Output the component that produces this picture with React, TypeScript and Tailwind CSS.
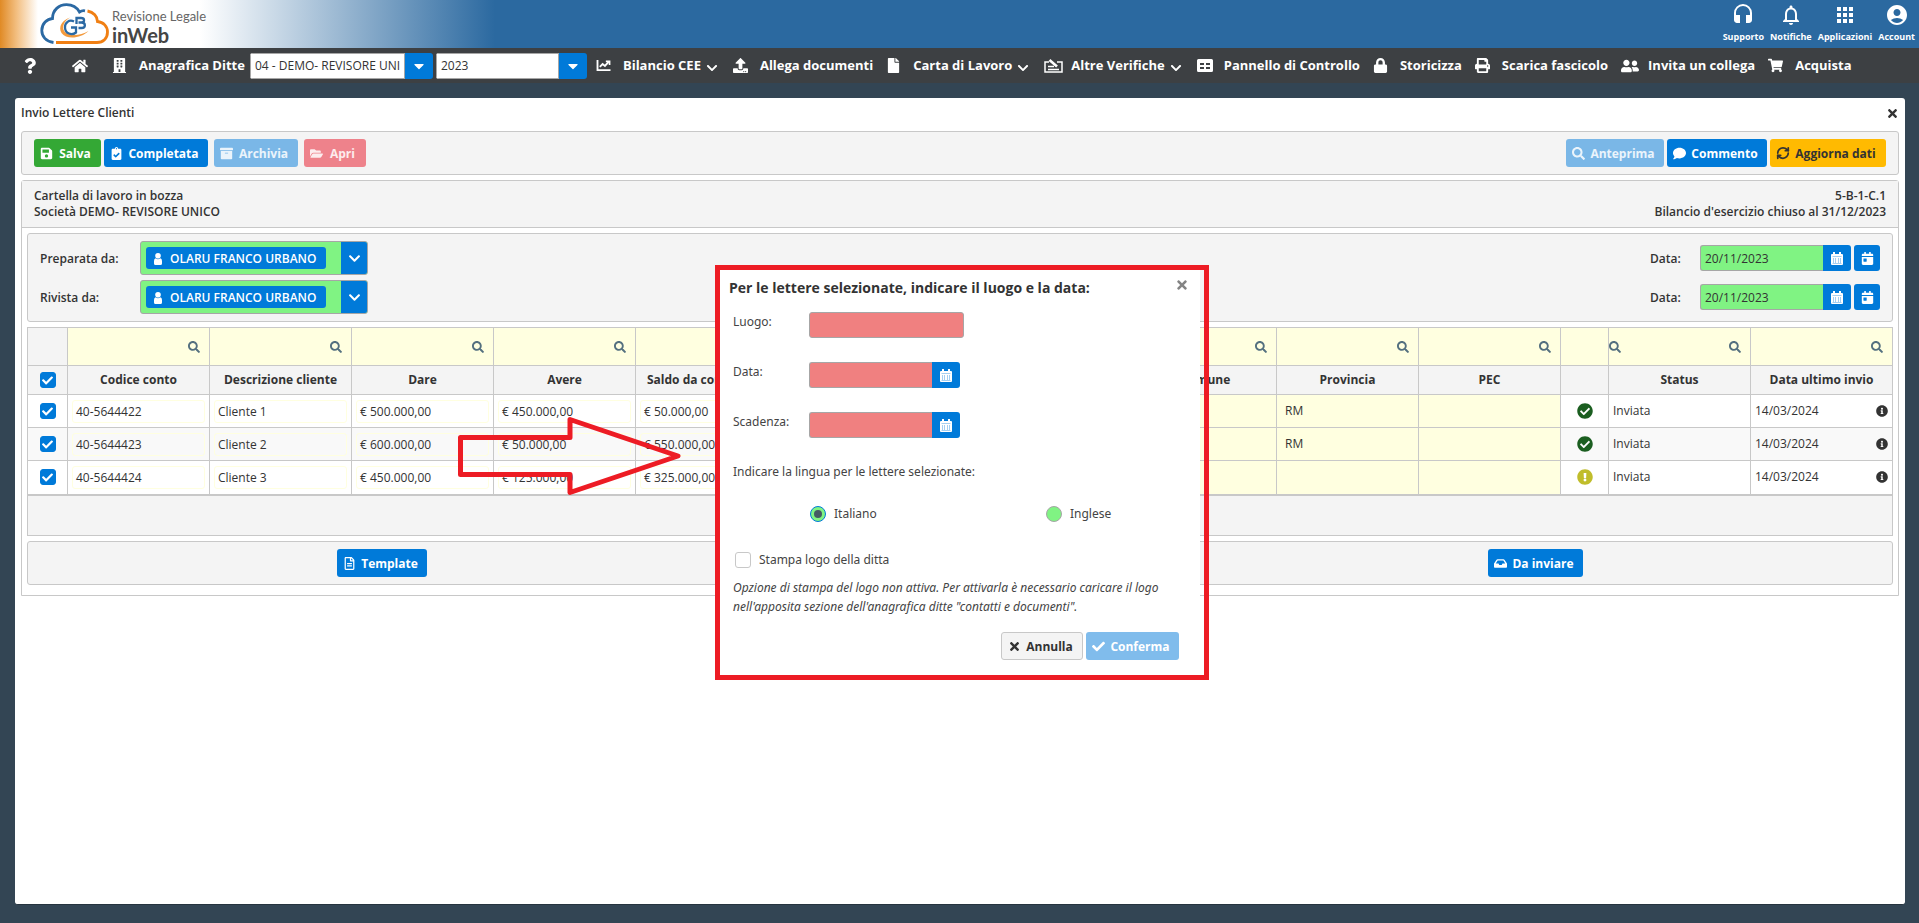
import React, { ReactNode, useState } from "react";
import {
  FaQuestion, FaHome, FaBuilding, FaFile, FaLock, FaPrint, FaUserFriends, FaShoppingCart, FaCaretDown,
  FaChevronDown, FaSave, FaClipboardCheck, FaArchive, FaFolderOpen, FaSearch, FaComment,
  FaCheckCircle, FaExclamationCircle, FaInfoCircle, FaInbox, FaTimes, FaCheck, FaRegFileAlt,
  FaCalendarDay, FaUpload,
} from "react-icons/fa";
import { MdHeadset, MdNotificationsNone, MdApps, MdAccountCircle } from "react-icons/md";
import { RefreshCw } from "lucide-react";

function GbLogo() {
  return (
    <svg viewBox="0 0 70 42" className="h-[42px] w-[70px]" fill="none" aria-label="GB">
      <path d="M13.500 39.500C6 38.500 1.800 33.500 1.800 27.500C1.800 20.500 7 16 12.500 15.500C12.500 7 19 1.600 26.500 1.600C32.500 1.600 37 4.500 39.500 9C41.500 7.700 43.500 7.500 45 7.800" stroke="#2b69a3" strokeWidth="2.800" />
      <path d="M47.500 8C53.500 9 57.500 13.500 57.500 18.500C63.500 19 67.500 23.500 67.500 29C67.500 35.500 63 39.500 57 39.500H16" stroke="#f07f13" strokeWidth="2.800" />
      <path d="M30 14.500C22 17 18 24 21.500 30C26.500 37 41 35.500 48.500 28C40 33 29 33.500 24.500 28.500C21.500 24 24 18 30 14.500Z" fill="#f39a3d" />
      <path d="M34 18.500C29 16 24.800 20 25 24.500C25.200 30.500 31.500 33 36 29.500V24.500H31" stroke="#2b69a3" strokeWidth="2.300" />
      <path d="M36.500 21V15H41C45 15 45 19.300 41.500 19.500H38.500M41.500 19.500C46 19.500 46 25 41.500 25H38.500" stroke="#2b69a3" strokeWidth="2.300" />
    </svg>
  );
}

function ChartIcon() {
  return (
    <svg viewBox="0 0 16 14" className="h-[13px] w-4" fill="none" stroke="currentColor" strokeWidth="2">
      <path d="M1 1V12H15" />
      <path d="M3.500 8.500L6.500 5.500L9 7.500L13 3" />
      <path d="M10 2.500H14V6.500" strokeWidth="1.800" />
    </svg>
  );
}

function BallotIcon() {
  return (
    <svg viewBox="0 0 19 15" className="h-[15px] w-[19px]" fill="none" stroke="currentColor" strokeWidth="1.500">
      <path d="M5 4H1V14H18V4H13" />
      <path d="M4 11.500H15M4 8.500H10" />
      <path d="M5.500 2L13 8.500" strokeWidth="2.600" />
    </svg>
  );
}

function TableIcon() {
  return (
    <svg viewBox="0 0 16 13" className="h-[13px] w-4">
      <path fill="currentColor" fillRule="evenodd" d="M1.500 0H14.500A1.500 1.500 0 0 1 16 1.500V11.500A1.500 1.500 0 0 1 14.500 13H1.500A1.500 1.500 0 0 1 0 11.500V1.500A1.500 1.500 0 0 1 1.500 0ZM3 4V6H7V4ZM9 4V6H13V4ZM3 8V10H7V8ZM9 8V10H13V8Z" />
    </svg>
  );
}

function PersonIcon() {
  return (
    <svg viewBox="0 0 8 12" className="h-3 w-2" fill="currentColor">
      <circle cx="4" cy="2.800" r="2.800" />
      <path d="M1.500 5.200Q4 7.500 6.500 5.200Q8 6 8 8V10.500Q8 12 6.500 12H1.500Q0 12 0 10.500V8Q0 6 1.500 5.200Z" />
    </svg>
  );
}

function CalendarIcon() {
  return (
    <svg viewBox="0 0 12 13" className="h-[13px] w-3">
      <path fill="#fff" d="M2 0H4V2H8V0H10V2H11Q12 2 12 3V12Q12 13 11 13H1Q0 13 0 12V3Q0 2 1 2H2Z" />
      <path stroke="#8fc3ee" strokeWidth="1" fill="none" d="M1.500 4.500H10.500M1.500 11.500H10.500M2.500 6V11M4.500 6V11M7.500 6V11M9.500 6V11" opacity=".8" />
    </svg>
  );
}

type MenuItemProps = { icon: ReactNode; label: string; arrow?: boolean };

function MenuItem({ icon, label, arrow }: MenuItemProps) {
  return (
    <a href="#" className="flex shrink-0 items-center text-[13px] font-bold whitespace-nowrap text-white">
      <span className="flex w-[27px] items-center text-[15px]">{icon}</span>
      {label}
      {arrow && <FaChevronDown className="mt-1 mr-[2px] ml-[5px] text-xs" />}
    </a>
  );
}

type BtnProps = { icon: ReactNode; label: string; tone: string; disabled?: boolean; className?: string; onClick?: () => void };

function Btn({ icon, label, tone, disabled, className = "", onClick }: BtnProps) {
  return (
    <button
      type="button"
      disabled={disabled}
      onClick={onClick}
      className={`flex h-7 shrink-0 items-center rounded-[3px] pl-[6px] text-xs font-bold whitespace-nowrap ${tone} ${className}`}
    >
      <span className="mr-1 flex w-[14px] shrink-0 items-center text-[13px]">{icon}</span>
      <span className="flex-1 pt-px pr-[9px] text-center">{label}</span>
    </button>
  );
}

function PersonRow({ label, id }: { label: string; id: string }) {
  return (
    <div className="flex items-center">
      <label htmlFor={id} className="w-[100px] pt-px text-xs font-semibold">{label}</label>
      <div className="flex h-[34px] w-[228px] overflow-hidden rounded-[3px] border border-[#a6a6a6] bg-[#80f383]">
        <div className="flex flex-1 items-center pl-[5px]">
          <span className="flex h-[22px] w-[180px] items-center gap-2 rounded-[3px] bg-[#007ad9] pt-px pl-2 text-xs font-semibold whitespace-nowrap text-white">
            <PersonIcon />
            OLARU FRANCO URBANO
          </span>
        </div>
        <button id={id} type="button" aria-label={`Scegli ${label}`} className="flex w-[26px] items-center justify-center bg-[#007ad9] text-white">
          <FaChevronDown className="text-[13px]" />
        </button>
      </div>
    </div>
  );
}

function DateRow({ id }: { id: string }) {
  return (
    <div className="flex h-[34px] items-center">
      <label htmlFor={id} className="w-[50px] pt-px text-xs font-semibold">Data:</label>
      <input id={id} type="text" defaultValue="20/11/2023" className="h-[26px] w-[123px] rounded-l-[3px] border border-r-0 border-[#a6a6a6] bg-[#80f383] px-1 text-xs outline-none" />
      <button type="button" aria-label="Apri calendario" className="flex h-[26px] w-7 items-center justify-center rounded-r-[3px] bg-[#007ad9]">
        <CalendarIcon />
      </button>
      <button type="button" aria-label="Oggi" className="ml-[3px] flex h-[26px] w-[26px] items-center justify-center rounded-[3px] bg-[#007ad9] text-[13px] text-white">
        <FaCalendarDay />
      </button>
    </div>
  );
}

function Tick({ id, label, defaultChecked = true }: { id?: string; label: string; defaultChecked?: boolean }) {
  return (
    <span className="grid h-4 w-4 place-items-center">
      <input
        id={id}
        type="checkbox"
        aria-label={label}
        defaultChecked={defaultChecked}
        className="peer col-start-1 row-start-1 h-4 w-4 appearance-none rounded-[3px] border border-[#c8c8c8] bg-white checked:border-[#007ad9] checked:bg-[#007ad9]"
      />
      <FaCheck className="pointer-events-none col-start-1 row-start-1 hidden text-[11px] text-white peer-checked:block" />
    </span>
  );
}

const columns = [
  { title: "Codice conto", width: "w-[142px]" },
  { title: "Descrizione cliente", width: "w-[142px]" },
  { title: "Dare", width: "w-[142px]" },
  { title: "Avere", width: "w-[142px]" },
  { title: "Saldo da cont.", width: "w-[142px]", align: "pl-[11px] text-left" },
  { title: "", width: "w-[142px]" },
  { title: "", width: "w-[73px]" },
  { title: "", width: "w-[142px]" },
  { title: "Comune", width: "w-[142px]" },
  { title: "Provincia", width: "w-[142px]" },
  { title: "PEC", width: "w-[142px]" },
];

const rows = [
  { code: "40-5644422", name: "Cliente 1", dare: "€ 500.000,00", avere: "€ 450.000,00", saldo: "€ 50.000,00", prov: "RM", ok: true, tone: "h-[33px] bg-white" },
  { code: "40-5644423", name: "Cliente 2", dare: "€ 600.000,00", avere: "€ 50.000,00", saldo: "€ 550.000,00", prov: "RM", ok: true, tone: "h-[33px] bg-[#f9f9f9]" },
  { code: "40-5644424", name: "Cliente 3", dare: "€ 450.000,00", avere: "€ 125.000,00", saldo: "€ 325.000,00", prov: "", ok: false, tone: "h-[34px] bg-white" },
];

function LettersTable() {
  const line = "border border-[#c8c8c8]";
  return (
    <table className="w-full table-fixed border-collapse text-xs">
      <colgroup>
        <col className="w-[40px]" />
        {columns.map((c, i) => <col key={i} className={c.width} />)}
        <col className="w-[48px]" />
        <col className="w-[142px]" />
        <col className="w-[142px]" />
      </colgroup>
      <thead className="bg-[#f4f4f4]">
        <tr className="h-[38px]">
          <td className={line} />
          {columns.map((c, i) => (
            <td key={i} className={`${line} bg-[#ffffe0] pr-[9px]`}>
              <FaSearch className="ml-auto text-xs text-[#54707f]" />
            </td>
          ))}
          <td className={`${line} bg-[#ffffe0]`} />
          <td className={`${line} bg-[#ffffe0] pr-[9px]`}>
            <div className="flex justify-between text-xs text-[#54707f]"><FaSearch /><FaSearch /></div>
          </td>
          <td className={`${line} bg-[#ffffe0] pr-[9px]`}>
            <FaSearch className="ml-auto text-xs text-[#54707f]" />
          </td>
        </tr>
        <tr className="h-[29px]">
          <th className={line}><div className="flex justify-center"><Tick label="Seleziona tutti" /></div></th>
          {columns.map((c, i) => (
            <th key={i} className={`${line} overflow-hidden font-bold whitespace-nowrap ${c.align ?? ""}`}>{c.title}</th>
          ))}
          <th className={line} />
          <th className={`${line} font-bold`}>Status</th>
          <th className={`${line} font-bold`}>Data ultimo invio</th>
        </tr>
      </thead>
      <tbody>
        {rows.map((r) => (
          <tr key={r.code} className={r.tone}>
            <td className={line}><div className="flex justify-center"><Tick label={r.name} /></div></td>
            {[r.code, r.name, r.dare, r.avere, r.saldo, "", "", ""].map((v, j) => (
              <td key={j} className={`${line} px-1`}>
                <div className="h-[23px] rounded-[3px] border border-[#ffffe0] px-[3px] leading-[22px] whitespace-nowrap">{v}</div>
              </td>
            ))}
            <td className={`${line} bg-[#ffffe0]`} />
            <td className={`${line} bg-[#ffffe0] px-2`}>{r.prov}</td>
            <td className={`${line} bg-[#ffffe0]`} />
            <td className={line}>
              {r.ok
                ? <FaCheckCircle className="mx-auto text-base text-[#1b5e20]" />
                : <FaExclamationCircle className="mx-auto text-base text-[#c0bd2b]" />}
            </td>
            <td className={`${line} px-1`}>Inviata</td>
            <td className={`${line} px-1`}>
              <div className="flex items-center justify-between">14/03/2024<FaInfoCircle className="text-xs" /></div>
            </td>
          </tr>
        ))}
      </tbody>
      <tfoot>
        <tr className="h-[41px] bg-[#f4f4f4]">
          <td colSpan={15} className="border border-t-2 border-[#c8c8c8]" />
        </tr>
      </tfoot>
    </table>
  );
}

function DialogDate({ id, label }: { id: string; label: string }) {
  return (
    <div className="flex h-[50px] items-start">
      <label htmlFor={id} className="w-[76px] leading-5">{label}</label>
      <input id={id} type="text" className="h-[26px] w-[123px] rounded-l-[3px] border border-r-0 border-[#a6a6a6] bg-[#f08080] px-1 outline-none" />
      <button type="button" aria-label="Apri calendario" className="flex h-[26px] w-7 items-center justify-center rounded-r-[3px] bg-[#007ad9]">
        <CalendarIcon />
      </button>
    </div>
  );
}

function LanguageOption({ label, checked, onPick }: { label: string; checked: boolean; onPick: () => void }) {
  return (
    <label className="flex items-center gap-2">
      <span className="grid h-4 w-4 place-items-center">
        <input
          type="radio"
          name="lingua"
          checked={checked}
          onChange={onPick}
          className="peer col-start-1 row-start-1 h-4 w-4 appearance-none rounded-full border border-[#a6a6a6] bg-[#80f383] checked:border-[#007ad9]"
        />
        <span className="pointer-events-none col-start-1 row-start-1 hidden h-2 w-2 rounded-full bg-[#455a64] peer-checked:block" />
      </span>
      {label}
    </label>
  );
}

function LettersDialog() {
  const [lang, setLang] = useState("Italiano");
  return (
    <div className="h-[415px] w-[494px] border-[5px] border-[#ed1c24] pr-1">
      <section role="dialog" aria-label="Indicare il luogo e la data" className="flex h-full flex-col bg-white text-xs text-[#444]">
        <header className="flex h-[42px] shrink-0 items-start justify-between pt-2 pr-[11px] pl-[9px]">
          <h2 className="text-sm leading-5 font-bold text-[#333]">Per le lettere selezionate, indicare il luogo e la data:</h2>
          <button type="button" aria-label="Chiudi" className="text-sm text-[#848484]"><FaTimes /></button>
        </header>
        <div className="flex flex-1 flex-col px-[13px] font-['Noto_Sans','Open_Sans',sans-serif]">
          <div className="flex h-[50px] items-start">
            <label htmlFor="luogo" className="w-[76px] leading-5">Luogo:</label>
            <input id="luogo" type="text" className="h-[26px] w-[155px] rounded-[3px] border border-[#a6a6a6] bg-[#f08080] px-1 outline-none" />
          </div>
          <DialogDate id="data-lettera" label="Data:" />
          <DialogDate id="scadenza" label="Scadenza:" />
          <p className="leading-5">Indicare la lingua per le lettere selezionate:</p>
          <div className="mt-6 grid grid-cols-[236px_1fr] pl-[77px]">
            <LanguageOption label="Italiano" checked={lang === "Italiano"} onPick={() => setLang("Italiano")} />
            <LanguageOption label="Inglese" checked={lang === "Inglese"} onPick={() => setLang("Inglese")} />
          </div>
          <div className="mt-[30px] flex items-center gap-2 pl-[2px]">
            <Tick id="stampa-logo" label="Stampa logo della ditta" defaultChecked={false} />
            <label htmlFor="stampa-logo">Stampa logo della ditta</label>
          </div>
          <p className="mt-[10px] leading-[19px] italic">
            Opzione di stampa del logo non attiva. Per attivarla è necessario caricare il logo
            nell'apposita sezione dell'anagrafica ditte "contatti e documenti".
          </p>
          <div className="mt-4 flex justify-end gap-[3px] pr-2 font-['Open_Sans','Noto_Sans',sans-serif]">
            <Btn icon={<FaTimes />} label="Annulla" tone="border border-[#c8c8c8] bg-[#f4f4f4] text-[#333]" className="w-[82px]" />
            <Btn icon={<FaCheck />} label="Conferma" disabled tone="bg-[#80bcec] text-white" className="w-[93px]" />
          </div>
        </div>
      </section>
    </div>
  );
}

function TopAction({ icon, label }: { icon: ReactNode; label: string }) {
  return (
    <a href="#" className="flex flex-col items-center text-[9px] leading-[14px] font-bold text-white">
      <span className="flex h-[26px] items-center text-2xl">{icon}</span>
      <span className="mt-[2px]">{label}</span>
    </a>
  );
}

export default function App() {
  const blue = "bg-[#007ad9] text-white";
  return (
    <div className="relative flex min-h-screen flex-col bg-[#334554] font-['Open_Sans','Noto_Sans',sans-serif] text-[#333]">
      <header className="flex h-12 shrink-0 items-start justify-between bg-[linear-gradient(to_right,#e08a25_0px,#f3c083_17px,#fff_38px,#fff_200px,#2b69a0_495px)] pl-10">
        <div className="flex items-center pt-[3px]">
          <GbLogo />
          <div className="ml-[2px] flex flex-col pt-1 font-['Lato',sans-serif] text-[#666]">
            <span className="text-[13px] leading-[18px]">Revisione Legale</span>
            <span className="text-xl leading-5 font-bold text-[#454545]">inWeb</span>
          </div>
        </div>
        <div className="flex gap-[6px] pt-[2px] pr-1">
          <TopAction icon={<MdHeadset />} label="Supporto" />
          <TopAction icon={<MdNotificationsNone />} label="Notifiche" />
          <TopAction icon={<MdApps />} label="Applicazioni" />
          <TopAction icon={<MdAccountCircle />} label="Account" />
        </div>
      </header>

      <nav className="flex h-[35px] shrink-0 items-center bg-[#3d4043] text-white">
        <a href="#" aria-label="Aiuto" className="ml-[22px] w-[50px] text-base"><FaQuestion /></a>
        <a href="#" aria-label="Home" className="w-10 text-base"><FaHome /></a>
        <MenuItem icon={<FaBuilding />} label="Anagrafica Ditte" />
        <div className="ml-[5px] flex h-[26px] w-[183px] shrink-0 overflow-hidden rounded-[3px]">
          <input aria-label="Ditta" defaultValue="04 - DEMO- REVISORE UNICO" className="min-w-0 flex-1 border border-[#a6a6a6] bg-white px-1 text-xs text-[#333]" />
          <button type="button" aria-label="Scegli ditta" className="flex w-7 items-center justify-center bg-[#007ad9] text-base"><FaCaretDown /></button>
        </div>
        <div className="ml-[3px] flex h-[26px] w-[151px] shrink-0 overflow-hidden rounded-[3px]">
          <input aria-label="Anno" defaultValue="2023" className="min-w-0 flex-1 border border-[#a6a6a6] bg-white px-1 text-xs text-[#333]" />
          <button type="button" aria-label="Scegli anno" className="flex w-7 items-center justify-center bg-[#007ad9] text-base"><FaCaretDown /></button>
        </div>
        <div className="flex gap-[13px] pl-[9px]">
          <MenuItem icon={<ChartIcon />} label="Bilancio CEE" arrow />
          <MenuItem icon={<FaUpload />} label="Allega documenti" />
          <MenuItem icon={<FaFile />} label="Carta di Lavoro" arrow />
          <MenuItem icon={<BallotIcon />} label="Altre Verifiche" arrow />
          <MenuItem icon={<TableIcon />} label="Pannello di Controllo" />
          <MenuItem icon={<FaLock />} label="Storicizza" />
          <MenuItem icon={<FaPrint />} label="Scarica fascicolo" />
          <MenuItem icon={<FaUserFriends className="text-lg" />} label="Invita un collega" />
          <MenuItem icon={<FaShoppingCart />} label="Acquista" />
        </div>
      </nav>

      <main className="mt-[15px] mr-[14px] mb-[18px] ml-[15px] flex-1 rounded-[3px] border-b border-[#26343f] bg-white px-[6px]">
        <div className="flex h-[33px] items-center justify-between pb-[3px]">
          <h1 className="text-xs font-semibold">Invio Lettere Clienti</h1>
          <button type="button" aria-label="Chiudi pannello" className="text-[13px]"><FaTimes /></button>
        </div>

        <div className="flex h-11 items-center justify-between rounded-[3px] border border-[#c8c8c8] bg-[#f4f4f4] px-3">
          <div className="flex">
            <Btn icon={<FaSave />} label="Salva" tone="bg-[#34a835] text-white" className="w-[67px]" />
            <Btn icon={<FaClipboardCheck />} label="Completata" tone={blue} className="ml-[3px] w-[104px]" />
            <Btn icon={<FaArchive />} label="Archivia" disabled tone="bg-[#7ab7e7] text-white/85" className="ml-[6px] w-[84px]" />
            <Btn icon={<FaFolderOpen />} label="Apri" disabled tone="bg-[#ee828b] text-white/85" className="ml-[6px] w-[62px]" />
          </div>
          <div className="flex gap-[3px]">
            <Btn icon={<FaSearch />} label="Anteprima" disabled tone="bg-[#7ab7e7] text-white/85" className="w-[98px]" />
            <Btn icon={<FaComment />} label="Commento" tone={blue} className="w-[100px]" />
            <Btn icon={<RefreshCw size={14} strokeWidth={3} />} label="Aggiorna dati" tone="bg-[#ffba01] text-[#333]" className="w-[116px]" />
          </div>
        </div>

        <section className="mt-[5px] rounded-t-[3px] border border-[#c8c8c8] pb-[10px]">
          <div className="flex h-[47px] items-center justify-between border-b border-[#c8c8c8] bg-[#f4f4f4] px-3 text-xs leading-4 font-semibold">
            <p>Cartella di lavoro in bozza<br />Società DEMO- REVISORE UNICO</p>
            <p className="text-right">5-B-1-C.1<br />Bilancio d'esercizio chiuso al 31/12/2023</p>
          </div>
          <div className="px-[5px] pt-[5px]">
            <div className="flex h-[89px] items-center justify-between rounded-[3px] border border-[#c8c8c8] bg-[#f4f4f4] px-3">
              <div className="flex flex-col gap-[5px]">
                <PersonRow id="preparata" label="Preparata da:" />
                <PersonRow id="rivista" label="Rivista da:" />
              </div>
              <div className="flex flex-col gap-[5px]">
                <DateRow id="data-preparata" />
                <DateRow id="data-rivista" />
              </div>
            </div>
            <div className="mt-[5px]"><LettersTable /></div>
            <div className="mt-[5px] grid h-11 grid-cols-[708px_1fr] items-center rounded-[3px] border border-[#c8c8c8] bg-[#f4f4f4]">
              <div className="flex justify-center">
                <Btn icon={<FaRegFileAlt />} label="Template" tone={blue} className="w-[90px]" />
              </div>
              <div className="flex justify-end pr-[309px]">
                <Btn icon={<FaInbox />} label="Da inviare" tone={blue} className="w-[95px]" />
              </div>
            </div>
          </div>
        </section>
      </main>

      <div className="absolute inset-x-0 top-[265px] flex justify-center pl-[5px]">
        <LettersDialog />
      </div>
      <svg viewBox="0 0 225 80" className="pointer-events-none absolute top-[416px] left-[457px] h-20 w-[225px]" fill="none" stroke="#ed1c24" strokeWidth="5">
        <path d="M3.500 21.500H113V3.500L221 40L113 76.500V58.500H3.500Z" strokeLinejoin="round" />
      </svg>
    </div>
  );
}
